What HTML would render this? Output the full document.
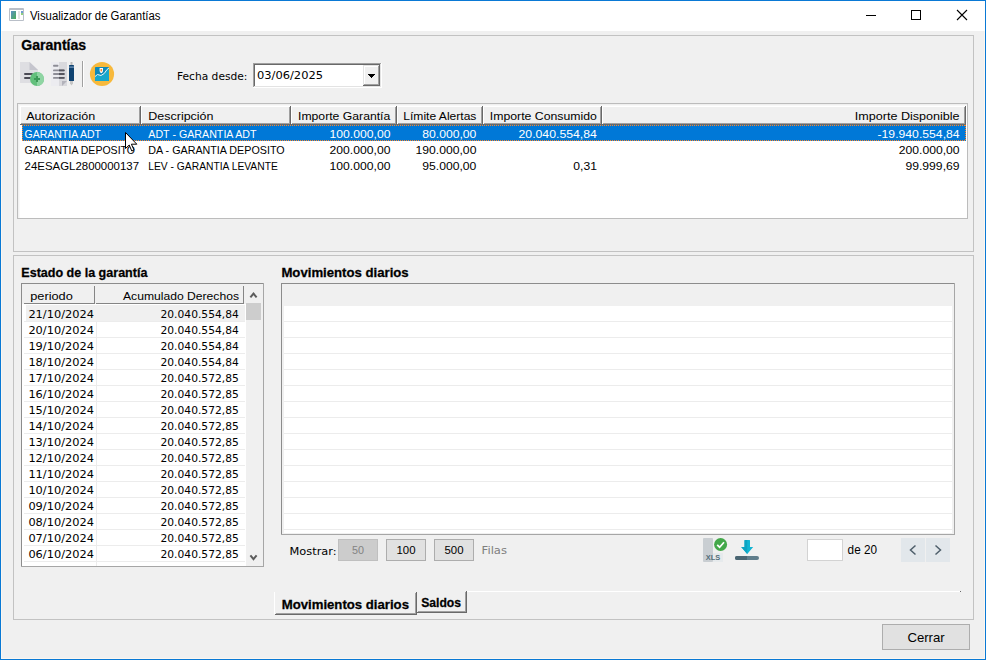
<!DOCTYPE html>
<html lang="es">
<head>
<meta charset="utf-8">
<title>Visualizador de Garantías</title>
<style>
html,body{margin:0;padding:0;background:#f0f0f0;overflow:hidden}
svg{display:block}
text{white-space:pre}
</style>
</head>
<body>
<svg width="986" height="660" viewBox="0 0 986 660">
<g id="window">
<rect x="0" y="0" width="986" height="660" fill="#0a79d5" />
<rect x="1" y="1" width="984" height="30" fill="#ffffff" />
<rect x="1" y="31" width="984" height="628" fill="#f0f0f0" />
<rect x="1" y="31" width="1" height="628" fill="#fcf7f0" />
<rect x="984" y="31" width="1" height="628" fill="#fcf7f0" />
<rect x="1" y="658" width="984" height="1" fill="#fcf7f0" />
</g>
<g id="titlebar">
<rect x="9" y="8" width="15" height="13" fill="#b9bfc8" rx="1"/>
<rect x="10" y="10" width="13" height="10" fill="#ffffff" />
<defs><linearGradient id="gi" x1="0" y1="0" x2="1" y2="1"><stop offset="0" stop-color="#5c8fc4"/><stop offset="1" stop-color="#4cae57"/></linearGradient></defs>
<rect x="11" y="11" width="5" height="8" fill="url(#gi)" />
<rect x="18" y="11" width="2" height="8" fill="#e4e4e4" />
<rect x="21" y="11" width="2" height="2" fill="#6f9bd0" />
<rect x="21" y="13" width="2" height="2" fill="#8fd07e" />
<text x="30" y="20" font-family="Liberation Sans, Arial, sans-serif" font-size="12" font-weight="normal" fill="#000" text-anchor="start" textLength="130.5" lengthAdjust="spacingAndGlyphs">Visualizador de Garantías</text>
<rect x="866" y="15" width="10" height="1" fill="#000" />
<rect x="911.5" y="10.5" width="9" height="9" fill="none" stroke="#000" stroke-width="1"/>
<path d="M957 10 L967 20 M967 10 L957 20" stroke="#000" stroke-width="1.1" fill="none"/>
</g>
<g id="panel-garantias">
<rect x="13" y="35" width="961" height="1" fill="#c2c2c2" />
<rect x="13" y="251" width="961" height="1" fill="#c2c2c2" />
<rect x="13" y="35" width="1" height="217" fill="#c2c2c2" />
<rect x="973" y="35" width="1" height="217" fill="#c2c2c2" />
<text x="21.2" y="49.7" font-family="Liberation Sans, Arial, sans-serif" font-size="14" font-weight="bold" fill="#000" stroke="#000" stroke-width="0.28" text-anchor="start" textLength="65.0" lengthAdjust="spacingAndGlyphs">Garantías</text>
</g>
<g id="toolbar">
<path d="M20 62 H29.5 L38 70 V83 H20 Z" fill="#dedee2"/>
<path d="M29.5 62 L38 70 H29.5 Z" fill="#c5c5cd"/>
<rect x="24" y="73" width="9" height="2" fill="#4b4b55" rx="1"/>
<rect x="24" y="77" width="7" height="2" fill="#4b4b55" rx="1"/>
<circle cx="37" cy="79" r="7" fill="#63c07c"/>
<path d="M37 72 A7 7 0 0 1 37 86 Z" fill="#8fd5a3"/>
<rect x="34" y="78" width="6" height="2" fill="#3c9a57" />
<rect x="36" y="76" width="2" height="6" fill="#3c9a57" />
<rect x="51" y="62" width="8" height="24" fill="#ececf0" />
<rect x="59" y="62" width="8" height="24" fill="#d9d9dd" />
<path d="M62 81 H67 L62 86 Z" fill="#b3b3bb"/>
<rect x="53" y="64.8" width="5.5" height="1.9" fill="#8d8d96" rx="0.9"/>
<rect x="53" y="69.4" width="11.700000000000003" height="1.9" fill="#8d8d96" rx="0.9"/>
<path d="M59 69.4 H63.800000000000004 a0.9 0.95 0 0 1 0 1.9 H59 Z" fill="#56565f"/>
<rect x="53" y="73.1" width="11.700000000000003" height="1.9" fill="#8d8d96" rx="0.9"/>
<path d="M59 73.1 H63.800000000000004 a0.9 0.95 0 0 1 0 1.9 H59 Z" fill="#56565f"/>
<rect x="53" y="76.9" width="11.700000000000003" height="1.9" fill="#8d8d96" rx="0.9"/>
<path d="M59 76.9 H63.800000000000004 a0.9 0.95 0 0 1 0 1.9 H59 Z" fill="#56565f"/>
<rect x="70.5" y="62" width="2" height="3" fill="#b9b9b9" />
<rect x="69" y="65" width="5" height="16" fill="#0f4270" rx="0.6"/>
<rect x="69" y="66.5" width="5" height="1.2" fill="#7d9ec2" />
<path d="M70 81 H73 V83.5 L71.5 85.5 L70 83.5 Z" fill="#c6c6c6"/>
<rect x="82" y="61" width="1" height="26" fill="#a0a0a0" />
<rect x="83" y="61" width="1" height="26" fill="#ffffff" />
<circle cx="102" cy="74" r="12.1" fill="#f7b93c"/>
<rect x="95" y="67" width="14" height="14" fill="#0e89b8" rx="0.8"/>
<path d="M95 76.5 L97.5 74.5 L101 75.5 L104.3 73.4 L107 69.5 L109 68 V80.2 Q109 81 108.2 81 H95.8 Q95 81 95 80.2 Z" fill="#17a7cb"/>
<path d="M95 76.5 L97.5 74.5 L101 75.5 L104.3 73.4 L107 69.5 L109 68" stroke="#ffffff" stroke-width="0.9" fill="none"/>
<path d="M99.6 68 H103 V71 Q103 72.6 101.3 73.2 Q99.6 72.6 99.6 71 Z" fill="#ffffff"/>
<rect x="100.5" y="69" width="1.6" height="2.4" fill="#f28b30" />
</g>
<g id="fecha">
<text x="177" y="80" font-family="DejaVu Sans, Verdana, sans-serif" font-size="11" font-weight="normal" fill="#000" text-anchor="start" textLength="70.4" lengthAdjust="spacingAndGlyphs">Fecha desde:</text>
<rect x="253" y="63" width="129" height="25" fill="#ffffff" />
<rect x="253" y="63" width="129" height="1" fill="#a0a0a0" />
<rect x="253" y="63" width="1" height="25" fill="#a0a0a0" />
<rect x="254" y="64" width="127" height="1" fill="#696969" />
<rect x="254" y="64" width="1" height="23" fill="#696969" />
<rect x="253" y="87" width="129" height="1" fill="#ffffff" />
<rect x="381" y="63" width="1" height="25" fill="#ffffff" />
<rect x="254" y="86" width="127" height="1" fill="#e3e3e3" />
<rect x="380" y="64" width="1" height="23" fill="#e3e3e3" />
<rect x="363" y="65" width="17" height="21" fill="#f0f0f0" />
<rect x="363" y="65" width="17" height="1" fill="#e3e3e3" />
<rect x="363" y="65" width="1" height="21" fill="#e3e3e3" />
<rect x="364" y="66" width="15" height="1" fill="#ffffff" />
<rect x="364" y="66" width="1" height="19" fill="#ffffff" />
<rect x="363" y="85" width="17" height="1" fill="#696969" />
<rect x="379" y="65" width="1" height="21" fill="#696969" />
<rect x="364" y="84" width="15" height="1" fill="#a0a0a0" />
<rect x="378" y="66" width="1" height="19" fill="#a0a0a0" />
<rect x="368" y="74" width="7" height="1" fill="#000" />
<rect x="369" y="75" width="5" height="1" fill="#000" />
<rect x="370" y="76" width="3" height="1" fill="#000" />
<rect x="371" y="77" width="1" height="1" fill="#000" />
<text x="257" y="79" font-family="DejaVu Sans, Verdana, sans-serif" font-size="11" font-weight="normal" fill="#000" text-anchor="start" textLength="66" lengthAdjust="spacingAndGlyphs">03/06/2025</text>
</g>
<g id="lista-garantias">
<rect x="17" y="103" width="951" height="116" fill="#ffffff" />
<rect x="17" y="103" width="951" height="1" fill="#bcbcbc" />
<rect x="17" y="218" width="951" height="1" fill="#bcbcbc" />
<rect x="17" y="103" width="1" height="116" fill="#bcbcbc" />
<rect x="967" y="103" width="1" height="116" fill="#bcbcbc" />
<rect x="18" y="104" width="949" height="1" fill="#f0f0f0" />
<rect x="18" y="105" width="949" height="1" fill="#f8f8f8" />
<rect x="18" y="104" width="1" height="114" fill="#f0f0f0" />
<rect x="19" y="105" width="1" height="113" fill="#f8f8f8" />
<rect x="20" y="106" width="121" height="19" fill="#f0f0f0" />
<rect x="20" y="106" width="121" height="1" fill="#ffffff" />
<rect x="20" y="106" width="1" height="19" fill="#ffffff" />
<rect x="20" y="124" width="121" height="1" fill="#696969" />
<rect x="140" y="106" width="1" height="19" fill="#696969" />
<rect x="21" y="123" width="119" height="1" fill="#a0a0a0" />
<rect x="139" y="107" width="1" height="17" fill="#a0a0a0" />
<rect x="141" y="106" width="150" height="19" fill="#f0f0f0" />
<rect x="141" y="106" width="150" height="1" fill="#ffffff" />
<rect x="141" y="106" width="1" height="19" fill="#ffffff" />
<rect x="141" y="124" width="150" height="1" fill="#696969" />
<rect x="290" y="106" width="1" height="19" fill="#696969" />
<rect x="142" y="123" width="148" height="1" fill="#a0a0a0" />
<rect x="289" y="107" width="1" height="17" fill="#a0a0a0" />
<rect x="291" y="106" width="106" height="19" fill="#f0f0f0" />
<rect x="291" y="106" width="106" height="1" fill="#ffffff" />
<rect x="291" y="106" width="1" height="19" fill="#ffffff" />
<rect x="291" y="124" width="106" height="1" fill="#696969" />
<rect x="396" y="106" width="1" height="19" fill="#696969" />
<rect x="292" y="123" width="104" height="1" fill="#a0a0a0" />
<rect x="395" y="107" width="1" height="17" fill="#a0a0a0" />
<rect x="397" y="106" width="86" height="19" fill="#f0f0f0" />
<rect x="397" y="106" width="86" height="1" fill="#ffffff" />
<rect x="397" y="106" width="1" height="19" fill="#ffffff" />
<rect x="397" y="124" width="86" height="1" fill="#696969" />
<rect x="482" y="106" width="1" height="19" fill="#696969" />
<rect x="398" y="123" width="84" height="1" fill="#a0a0a0" />
<rect x="481" y="107" width="1" height="17" fill="#a0a0a0" />
<rect x="483" y="106" width="119" height="19" fill="#f0f0f0" />
<rect x="483" y="106" width="119" height="1" fill="#ffffff" />
<rect x="483" y="106" width="1" height="19" fill="#ffffff" />
<rect x="483" y="124" width="119" height="1" fill="#696969" />
<rect x="601" y="106" width="1" height="19" fill="#696969" />
<rect x="484" y="123" width="117" height="1" fill="#a0a0a0" />
<rect x="600" y="107" width="1" height="17" fill="#a0a0a0" />
<rect x="602" y="106" width="364" height="19" fill="#f0f0f0" />
<rect x="602" y="106" width="364" height="1" fill="#ffffff" />
<rect x="602" y="106" width="1" height="19" fill="#ffffff" />
<rect x="602" y="124" width="364" height="1" fill="#696969" />
<rect x="965" y="106" width="1" height="19" fill="#696969" />
<rect x="603" y="123" width="362" height="1" fill="#a0a0a0" />
<rect x="964" y="107" width="1" height="17" fill="#a0a0a0" />
<text x="26.2" y="120.3" font-family="Liberation Sans, Arial, sans-serif" font-size="11.4" font-weight="normal" fill="#000" text-anchor="start" textLength="69.0" lengthAdjust="spacingAndGlyphs">Autorización</text>
<text x="148.3" y="120.3" font-family="Liberation Sans, Arial, sans-serif" font-size="11.4" font-weight="normal" fill="#000" text-anchor="start" textLength="65.2" lengthAdjust="spacingAndGlyphs">Descripción</text>
<text x="298" y="120.3" font-family="Liberation Sans, Arial, sans-serif" font-size="11.4" font-weight="normal" fill="#000" text-anchor="start" textLength="92.3" lengthAdjust="spacingAndGlyphs">Importe Garantía</text>
<text x="403.3" y="120.3" font-family="Liberation Sans, Arial, sans-serif" font-size="11.4" font-weight="normal" fill="#000" text-anchor="start" textLength="73.1" lengthAdjust="spacingAndGlyphs">Límite Alertas</text>
<text x="489.8" y="120.3" font-family="Liberation Sans, Arial, sans-serif" font-size="11.4" font-weight="normal" fill="#000" text-anchor="start" textLength="107.1" lengthAdjust="spacingAndGlyphs">Importe Consumido</text>
<text x="854.8" y="120.3" font-family="Liberation Sans, Arial, sans-serif" font-size="11.4" font-weight="normal" fill="#000" text-anchor="start" textLength="104.8" lengthAdjust="spacingAndGlyphs">Importe Disponible</text>
<rect x="22" y="125" width="944" height="16" fill="#0078d7" />
<g stroke="#ff8728" stroke-width="1" stroke-dasharray="1 1" shape-rendering="crispEdges" fill="none"><path d="M22 125.5 H966"/><path d="M22 140.5 H966"/><path d="M22.5 125 V141"/><path d="M965.5 125 V141"/></g>
<text x="24.6" y="137.9" font-family="Liberation Sans, Arial, sans-serif" font-size="11.4" font-weight="normal" fill="#ffffff" text-anchor="start" textLength="76.3" lengthAdjust="spacingAndGlyphs">GARANTIA ADT</text>
<text x="148.3" y="137.9" font-family="Liberation Sans, Arial, sans-serif" font-size="11.4" font-weight="normal" fill="#ffffff" text-anchor="start" textLength="108.3" lengthAdjust="spacingAndGlyphs">ADT - GARANTIA ADT</text>
<text x="329.6" y="137.9" font-family="Liberation Sans, Arial, sans-serif" font-size="11.4" font-weight="normal" fill="#ffffff" text-anchor="start" textLength="60.8" lengthAdjust="spacingAndGlyphs">100.000,00</text>
<text x="422.3" y="137.9" font-family="Liberation Sans, Arial, sans-serif" font-size="11.4" font-weight="normal" fill="#ffffff" text-anchor="start" textLength="54.1" lengthAdjust="spacingAndGlyphs">80.000,00</text>
<text x="518.5" y="137.9" font-family="Liberation Sans, Arial, sans-serif" font-size="11.4" font-weight="normal" fill="#ffffff" text-anchor="start" textLength="78.4" lengthAdjust="spacingAndGlyphs">20.040.554,84</text>
<text x="877.5" y="137.9" font-family="Liberation Sans, Arial, sans-serif" font-size="11.4" font-weight="normal" fill="#ffffff" text-anchor="start" textLength="82.1" lengthAdjust="spacingAndGlyphs">-19.940.554,84</text>
<text x="24.6" y="153.9" font-family="Liberation Sans, Arial, sans-serif" font-size="11.4" font-weight="normal" fill="#000000" text-anchor="start" textLength="110.4" lengthAdjust="spacingAndGlyphs">GARANTIA DEPOSITO</text>
<text x="148.3" y="153.9" font-family="Liberation Sans, Arial, sans-serif" font-size="11.4" font-weight="normal" fill="#000000" text-anchor="start" textLength="136.3" lengthAdjust="spacingAndGlyphs">DA - GARANTIA DEPOSITO</text>
<text x="329.6" y="153.9" font-family="Liberation Sans, Arial, sans-serif" font-size="11.4" font-weight="normal" fill="#000000" text-anchor="start" textLength="60.8" lengthAdjust="spacingAndGlyphs">200.000,00</text>
<text x="415.5" y="153.9" font-family="Liberation Sans, Arial, sans-serif" font-size="11.4" font-weight="normal" fill="#000000" text-anchor="start" textLength="60.9" lengthAdjust="spacingAndGlyphs">190.000,00</text>
<text x="898.8" y="153.9" font-family="Liberation Sans, Arial, sans-serif" font-size="11.4" font-weight="normal" fill="#000000" text-anchor="start" textLength="60.8" lengthAdjust="spacingAndGlyphs">200.000,00</text>
<text x="24.6" y="169.9" font-family="Liberation Sans, Arial, sans-serif" font-size="11.4" font-weight="normal" fill="#000000" text-anchor="start" textLength="114.4" lengthAdjust="spacingAndGlyphs">24ESAGL2800000137</text>
<text x="148.3" y="169.9" font-family="Liberation Sans, Arial, sans-serif" font-size="11.4" font-weight="normal" fill="#000000" text-anchor="start" textLength="129.5" lengthAdjust="spacingAndGlyphs">LEV - GARANTIA LEVANTE</text>
<text x="329.6" y="169.9" font-family="Liberation Sans, Arial, sans-serif" font-size="11.4" font-weight="normal" fill="#000000" text-anchor="start" textLength="60.8" lengthAdjust="spacingAndGlyphs">100.000,00</text>
<text x="422.3" y="169.9" font-family="Liberation Sans, Arial, sans-serif" font-size="11.4" font-weight="normal" fill="#000000" text-anchor="start" textLength="54.1" lengthAdjust="spacingAndGlyphs">95.000,00</text>
<text x="573.3" y="169.9" font-family="Liberation Sans, Arial, sans-serif" font-size="11.4" font-weight="normal" fill="#000000" text-anchor="start" textLength="23.6" lengthAdjust="spacingAndGlyphs">0,31</text>
<text x="905.4" y="169.9" font-family="Liberation Sans, Arial, sans-serif" font-size="11.4" font-weight="normal" fill="#000000" text-anchor="start" textLength="54.2" lengthAdjust="spacingAndGlyphs">99.999,69</text>
<path d="M125.5 132.5 V148.5 L129.2 145 L131.8 151 L134 150 L131.4 144.2 H136.8 Z" fill="#ffffff" stroke="#000000" stroke-width="1" stroke-linejoin="miter"/>
</g>
<g id="panel-detalle">
<rect x="13" y="255" width="961" height="1" fill="#c2c2c2" />
<rect x="13" y="619" width="961" height="1" fill="#c2c2c2" />
<rect x="13" y="255" width="1" height="365" fill="#c2c2c2" />
<rect x="973" y="255" width="1" height="365" fill="#c2c2c2" />
<text x="21.3" y="277" font-family="Liberation Sans, Arial, sans-serif" font-size="13.2" font-weight="bold" fill="#000" stroke="#000" stroke-width="0.28" text-anchor="start" textLength="126.1" lengthAdjust="spacingAndGlyphs">Estado de la garantía</text>
<text x="281.4" y="277" font-family="Liberation Sans, Arial, sans-serif" font-size="13.2" font-weight="bold" fill="#000" stroke="#000" stroke-width="0.28" text-anchor="start" textLength="127.3" lengthAdjust="spacingAndGlyphs">Movimientos diarios</text>
</g>
<g id="grid-estado">
<rect x="21" y="283" width="243" height="284" fill="#ffffff" />
<rect x="22" y="284" width="241" height="20" fill="#f0f0f0" />
<rect x="21" y="283" width="243" height="1" fill="#8c8c8c" />
<rect x="21" y="283" width="1" height="284" fill="#8c8c8c" />
<rect x="21" y="566" width="243" height="1" fill="#a6a6a6" />
<rect x="263" y="283" width="1" height="284" fill="#a6a6a6" />
<rect x="24" y="303" width="71" height="1" fill="#858585" />
<rect x="94" y="286" width="1" height="18" fill="#858585" />
<rect x="96" y="303" width="148" height="1" fill="#858585" />
<rect x="243" y="286" width="1" height="18" fill="#858585" />
<text x="30.2" y="300" font-family="Liberation Sans, Arial, sans-serif" font-size="11.4" font-weight="normal" fill="#000" text-anchor="start" textLength="42.6" lengthAdjust="spacingAndGlyphs">periodo</text>
<text x="123" y="300" font-family="Liberation Sans, Arial, sans-serif" font-size="11.4" font-weight="normal" fill="#000" text-anchor="start" textLength="116" lengthAdjust="spacingAndGlyphs">Acumulado Derechos</text>
<rect x="246" y="284" width="17" height="282" fill="#f0f0f0" />
<rect x="246" y="303" width="15" height="17" fill="#cdcdcd" />
<path d="M250.4 297.4 L253.5 293.6 L256.6 297.4" stroke="#5c5c5c" stroke-width="2" fill="none"/>
<path d="M250.4 555.3 L253.5 559.1 L256.6 555.3" stroke="#5c5c5c" stroke-width="2" fill="none"/>
<rect x="26" y="305" width="219" height="16" fill="#f0f0f0" />
<rect x="24" y="321" width="221" height="1" fill="#ececec" />
<rect x="24" y="337" width="221" height="1" fill="#ececec" />
<rect x="24" y="353" width="221" height="1" fill="#ececec" />
<rect x="24" y="369" width="221" height="1" fill="#ececec" />
<rect x="24" y="385" width="221" height="1" fill="#ececec" />
<rect x="24" y="401" width="221" height="1" fill="#ececec" />
<rect x="24" y="417" width="221" height="1" fill="#ececec" />
<rect x="24" y="433" width="221" height="1" fill="#ececec" />
<rect x="24" y="449" width="221" height="1" fill="#ececec" />
<rect x="24" y="465" width="221" height="1" fill="#ececec" />
<rect x="24" y="481" width="221" height="1" fill="#ececec" />
<rect x="24" y="497" width="221" height="1" fill="#ececec" />
<rect x="24" y="513" width="221" height="1" fill="#ececec" />
<rect x="24" y="529" width="221" height="1" fill="#ececec" />
<rect x="24" y="545" width="221" height="1" fill="#ececec" />
<rect x="24" y="561" width="221" height="1" fill="#ececec" />
<rect x="96" y="322" width="1" height="244" fill="#ececec" />
<text x="28.4" y="317.7" font-family="DejaVu Sans, Verdana, sans-serif" font-size="11" font-weight="normal" fill="#000" text-anchor="start" textLength="65.5" lengthAdjust="spacingAndGlyphs">21/10/2024</text>
<text x="160.5" y="317.7" font-family="DejaVu Sans, Verdana, sans-serif" font-size="11" font-weight="normal" fill="#000" text-anchor="start" textLength="78.3" lengthAdjust="spacingAndGlyphs">20.040.554,84</text>
<text x="28.4" y="333.7" font-family="DejaVu Sans, Verdana, sans-serif" font-size="11" font-weight="normal" fill="#000" text-anchor="start" textLength="65.5" lengthAdjust="spacingAndGlyphs">20/10/2024</text>
<text x="160.5" y="333.7" font-family="DejaVu Sans, Verdana, sans-serif" font-size="11" font-weight="normal" fill="#000" text-anchor="start" textLength="78.3" lengthAdjust="spacingAndGlyphs">20.040.554,84</text>
<text x="28.4" y="349.7" font-family="DejaVu Sans, Verdana, sans-serif" font-size="11" font-weight="normal" fill="#000" text-anchor="start" textLength="65.5" lengthAdjust="spacingAndGlyphs">19/10/2024</text>
<text x="160.5" y="349.7" font-family="DejaVu Sans, Verdana, sans-serif" font-size="11" font-weight="normal" fill="#000" text-anchor="start" textLength="78.3" lengthAdjust="spacingAndGlyphs">20.040.554,84</text>
<text x="28.4" y="365.7" font-family="DejaVu Sans, Verdana, sans-serif" font-size="11" font-weight="normal" fill="#000" text-anchor="start" textLength="65.5" lengthAdjust="spacingAndGlyphs">18/10/2024</text>
<text x="160.5" y="365.7" font-family="DejaVu Sans, Verdana, sans-serif" font-size="11" font-weight="normal" fill="#000" text-anchor="start" textLength="78.3" lengthAdjust="spacingAndGlyphs">20.040.554,84</text>
<text x="28.4" y="381.7" font-family="DejaVu Sans, Verdana, sans-serif" font-size="11" font-weight="normal" fill="#000" text-anchor="start" textLength="65.5" lengthAdjust="spacingAndGlyphs">17/10/2024</text>
<text x="160.5" y="381.7" font-family="DejaVu Sans, Verdana, sans-serif" font-size="11" font-weight="normal" fill="#000" text-anchor="start" textLength="78.3" lengthAdjust="spacingAndGlyphs">20.040.572,85</text>
<text x="28.4" y="397.7" font-family="DejaVu Sans, Verdana, sans-serif" font-size="11" font-weight="normal" fill="#000" text-anchor="start" textLength="65.5" lengthAdjust="spacingAndGlyphs">16/10/2024</text>
<text x="160.5" y="397.7" font-family="DejaVu Sans, Verdana, sans-serif" font-size="11" font-weight="normal" fill="#000" text-anchor="start" textLength="78.3" lengthAdjust="spacingAndGlyphs">20.040.572,85</text>
<text x="28.4" y="413.7" font-family="DejaVu Sans, Verdana, sans-serif" font-size="11" font-weight="normal" fill="#000" text-anchor="start" textLength="65.5" lengthAdjust="spacingAndGlyphs">15/10/2024</text>
<text x="160.5" y="413.7" font-family="DejaVu Sans, Verdana, sans-serif" font-size="11" font-weight="normal" fill="#000" text-anchor="start" textLength="78.3" lengthAdjust="spacingAndGlyphs">20.040.572,85</text>
<text x="28.4" y="429.7" font-family="DejaVu Sans, Verdana, sans-serif" font-size="11" font-weight="normal" fill="#000" text-anchor="start" textLength="65.5" lengthAdjust="spacingAndGlyphs">14/10/2024</text>
<text x="160.5" y="429.7" font-family="DejaVu Sans, Verdana, sans-serif" font-size="11" font-weight="normal" fill="#000" text-anchor="start" textLength="78.3" lengthAdjust="spacingAndGlyphs">20.040.572,85</text>
<text x="28.4" y="445.7" font-family="DejaVu Sans, Verdana, sans-serif" font-size="11" font-weight="normal" fill="#000" text-anchor="start" textLength="65.5" lengthAdjust="spacingAndGlyphs">13/10/2024</text>
<text x="160.5" y="445.7" font-family="DejaVu Sans, Verdana, sans-serif" font-size="11" font-weight="normal" fill="#000" text-anchor="start" textLength="78.3" lengthAdjust="spacingAndGlyphs">20.040.572,85</text>
<text x="28.4" y="461.7" font-family="DejaVu Sans, Verdana, sans-serif" font-size="11" font-weight="normal" fill="#000" text-anchor="start" textLength="65.5" lengthAdjust="spacingAndGlyphs">12/10/2024</text>
<text x="160.5" y="461.7" font-family="DejaVu Sans, Verdana, sans-serif" font-size="11" font-weight="normal" fill="#000" text-anchor="start" textLength="78.3" lengthAdjust="spacingAndGlyphs">20.040.572,85</text>
<text x="28.4" y="477.7" font-family="DejaVu Sans, Verdana, sans-serif" font-size="11" font-weight="normal" fill="#000" text-anchor="start" textLength="65.5" lengthAdjust="spacingAndGlyphs">11/10/2024</text>
<text x="160.5" y="477.7" font-family="DejaVu Sans, Verdana, sans-serif" font-size="11" font-weight="normal" fill="#000" text-anchor="start" textLength="78.3" lengthAdjust="spacingAndGlyphs">20.040.572,85</text>
<text x="28.4" y="493.7" font-family="DejaVu Sans, Verdana, sans-serif" font-size="11" font-weight="normal" fill="#000" text-anchor="start" textLength="65.5" lengthAdjust="spacingAndGlyphs">10/10/2024</text>
<text x="160.5" y="493.7" font-family="DejaVu Sans, Verdana, sans-serif" font-size="11" font-weight="normal" fill="#000" text-anchor="start" textLength="78.3" lengthAdjust="spacingAndGlyphs">20.040.572,85</text>
<text x="28.4" y="509.7" font-family="DejaVu Sans, Verdana, sans-serif" font-size="11" font-weight="normal" fill="#000" text-anchor="start" textLength="65.5" lengthAdjust="spacingAndGlyphs">09/10/2024</text>
<text x="160.5" y="509.7" font-family="DejaVu Sans, Verdana, sans-serif" font-size="11" font-weight="normal" fill="#000" text-anchor="start" textLength="78.3" lengthAdjust="spacingAndGlyphs">20.040.572,85</text>
<text x="28.4" y="525.7" font-family="DejaVu Sans, Verdana, sans-serif" font-size="11" font-weight="normal" fill="#000" text-anchor="start" textLength="65.5" lengthAdjust="spacingAndGlyphs">08/10/2024</text>
<text x="160.5" y="525.7" font-family="DejaVu Sans, Verdana, sans-serif" font-size="11" font-weight="normal" fill="#000" text-anchor="start" textLength="78.3" lengthAdjust="spacingAndGlyphs">20.040.572,85</text>
<text x="28.4" y="541.7" font-family="DejaVu Sans, Verdana, sans-serif" font-size="11" font-weight="normal" fill="#000" text-anchor="start" textLength="65.5" lengthAdjust="spacingAndGlyphs">07/10/2024</text>
<text x="160.5" y="541.7" font-family="DejaVu Sans, Verdana, sans-serif" font-size="11" font-weight="normal" fill="#000" text-anchor="start" textLength="78.3" lengthAdjust="spacingAndGlyphs">20.040.572,85</text>
<text x="28.4" y="557.7" font-family="DejaVu Sans, Verdana, sans-serif" font-size="11" font-weight="normal" fill="#000" text-anchor="start" textLength="65.5" lengthAdjust="spacingAndGlyphs">06/10/2024</text>
<text x="160.5" y="557.7" font-family="DejaVu Sans, Verdana, sans-serif" font-size="11" font-weight="normal" fill="#000" text-anchor="start" textLength="78.3" lengthAdjust="spacingAndGlyphs">20.040.572,85</text>
</g>
<g id="grid-movimientos">
<rect x="281" y="283" width="674" height="252" fill="#f0f0f0" />
<rect x="284" y="306" width="668" height="227" fill="#ffffff" />
<rect x="284" y="321" width="668" height="1" fill="#ececec" />
<rect x="284" y="337" width="668" height="1" fill="#ececec" />
<rect x="284" y="353" width="668" height="1" fill="#ececec" />
<rect x="284" y="369" width="668" height="1" fill="#ececec" />
<rect x="284" y="385" width="668" height="1" fill="#ececec" />
<rect x="284" y="401" width="668" height="1" fill="#ececec" />
<rect x="284" y="417" width="668" height="1" fill="#ececec" />
<rect x="284" y="433" width="668" height="1" fill="#ececec" />
<rect x="284" y="449" width="668" height="1" fill="#ececec" />
<rect x="284" y="465" width="668" height="1" fill="#ececec" />
<rect x="284" y="481" width="668" height="1" fill="#ececec" />
<rect x="284" y="497" width="668" height="1" fill="#ececec" />
<rect x="284" y="513" width="668" height="1" fill="#ececec" />
<rect x="284" y="529" width="668" height="1" fill="#ececec" />
<rect x="281" y="283" width="674" height="1" fill="#8c8c8c" />
<rect x="281" y="283" width="1" height="252" fill="#8c8c8c" />
<rect x="281" y="534" width="674" height="1" fill="#a6a6a6" />
<rect x="954" y="283" width="1" height="252" fill="#a6a6a6" />
</g>
<g id="pager">
<text x="289.5" y="554.7" font-family="DejaVu Sans, Verdana, sans-serif" font-size="11" font-weight="normal" fill="#000" text-anchor="start" textLength="47.1" lengthAdjust="spacingAndGlyphs">Mostrar:</text>
<rect x="338" y="539" width="40" height="22" fill="#cccccc" />
<rect x="338" y="539" width="40" height="1" fill="#bfbfbf" />
<rect x="338" y="560" width="40" height="1" fill="#bfbfbf" />
<rect x="338" y="539" width="1" height="22" fill="#bfbfbf" />
<rect x="377" y="539" width="1" height="22" fill="#bfbfbf" />
<rect x="386" y="539" width="40" height="22" fill="#e1e1e1" />
<rect x="386" y="539" width="40" height="1" fill="#adadad" />
<rect x="386" y="560" width="40" height="1" fill="#adadad" />
<rect x="386" y="539" width="1" height="22" fill="#adadad" />
<rect x="425" y="539" width="1" height="22" fill="#adadad" />
<rect x="434" y="539" width="40" height="22" fill="#e1e1e1" />
<rect x="434" y="539" width="40" height="1" fill="#adadad" />
<rect x="434" y="560" width="40" height="1" fill="#adadad" />
<rect x="434" y="539" width="1" height="22" fill="#adadad" />
<rect x="473" y="539" width="1" height="22" fill="#adadad" />
<text x="352" y="554" font-family="Liberation Sans, Arial, sans-serif" font-size="11.5" font-weight="normal" fill="#838383" text-anchor="start" textLength="12" lengthAdjust="spacingAndGlyphs">50</text>
<text x="396.5" y="554" font-family="Liberation Sans, Arial, sans-serif" font-size="11.5" font-weight="normal" fill="#000" text-anchor="start" textLength="19.0" lengthAdjust="spacingAndGlyphs">100</text>
<text x="444.5" y="554" font-family="Liberation Sans, Arial, sans-serif" font-size="11.5" font-weight="normal" fill="#000" text-anchor="start" textLength="19.0" lengthAdjust="spacingAndGlyphs">500</text>
<text x="481.6" y="554" font-family="DejaVu Sans, Verdana, sans-serif" font-size="11" font-weight="normal" fill="#7f7f7f" text-anchor="start" textLength="25.4" lengthAdjust="spacingAndGlyphs">Filas</text>
<rect x="703" y="538" width="10" height="24" fill="#c9ced2" rx="1"/>
<rect x="713" y="553" width="10" height="9" fill="#e6eaec" />
<circle cx="720.6" cy="544.5" r="6.5" fill="#43a84a"/>
<path d="M717.2 544.8 L719.6 547.2 L724 542.2" stroke="#ffffff" stroke-width="1.7" fill="none"/>
<text x="705.8" y="559.7" font-family="Liberation Sans, Arial, sans-serif" font-size="7.4" font-weight="bold" fill="#546e7a" text-anchor="start" textLength="14.4" lengthAdjust="spacingAndGlyphs">XLS</text>
<path d="M744.5 540.5 Q744.5 540 745 540 H749.5 Q750 540 750 540.5 V547 H753.2 L747.2 554 L741.2 547 H744.5 Z" fill="#12b4d2"/>
<path d="M744.5 540.5 Q744.5 540 745 540 H747.2 V554 L741.2 547 H744.5 Z" fill="#0ea3c2"/>
<rect x="735" y="556" width="24" height="4" fill="#607d8b" rx="2"/>
<path d="M737 556 H747 V560 H737 A2 2 0 0 1 737 556 Z" fill="#4a6572"/>
<rect x="807" y="539" width="36" height="22" fill="#ffffff" />
<rect x="807" y="539" width="36" height="1" fill="#d3d3d3" />
<rect x="807" y="560" width="36" height="1" fill="#d3d3d3" />
<rect x="807" y="539" width="1" height="22" fill="#d3d3d3" />
<rect x="842" y="539" width="1" height="22" fill="#d3d3d3" />
<text x="847.6" y="554" font-family="Liberation Sans, Arial, sans-serif" font-size="12.5" font-weight="normal" fill="#000" text-anchor="start" textLength="29.4" lengthAdjust="spacingAndGlyphs">de 20</text>
<rect x="901" y="538" width="24" height="24" fill="#e2e7eb" />
<rect x="926" y="538" width="24" height="24" fill="#e2e7eb" />
<path d="M915.5 545.5 L910.5 550 L915.5 554.5" stroke="#4f5f6b" stroke-width="1.5" fill="none"/>
<path d="M935.5 545.5 L940.5 550 L935.5 554.5" stroke="#4f5f6b" stroke-width="1.5" fill="none"/>
</g>
<g id="tabs">
<rect x="467" y="591" width="494" height="1" fill="#ffffff" />
<rect x="960" y="591" width="1" height="1" fill="#696969" />
<rect x="274" y="592" width="1" height="22" fill="#ffffff" />
<rect x="275" y="614" width="141" height="1" fill="#696969" />
<rect x="416" y="592" width="1" height="23" fill="#696969" />
<rect x="276" y="613" width="139" height="1" fill="#a0a0a0" />
<rect x="415" y="593" width="1" height="21" fill="#a0a0a0" />
<rect x="417" y="612" width="49" height="1" fill="#696969" />
<rect x="466" y="591" width="1" height="22" fill="#696969" />
<rect x="418" y="611" width="47" height="1" fill="#a0a0a0" />
<rect x="465" y="592" width="1" height="20" fill="#a0a0a0" />
<text x="281.7" y="609" font-family="Liberation Sans, Arial, sans-serif" font-size="13.2" font-weight="bold" fill="#000" stroke="#000" stroke-width="0.28" text-anchor="start" textLength="127.3" lengthAdjust="spacingAndGlyphs">Movimientos diarios</text>
<text x="421.2" y="607" font-family="Liberation Sans, Arial, sans-serif" font-size="13.2" font-weight="bold" fill="#000" stroke="#000" stroke-width="0.28" text-anchor="start" textLength="39.8" lengthAdjust="spacingAndGlyphs">Saldos</text>
</g>
<g id="btn-cerrar">
<rect x="882" y="624" width="88" height="26" fill="#e1e1e1" />
<rect x="882" y="624" width="88" height="1" fill="#adadad" />
<rect x="882" y="649" width="88" height="1" fill="#adadad" />
<rect x="882" y="624" width="1" height="26" fill="#adadad" />
<rect x="969" y="624" width="1" height="26" fill="#adadad" />
<text x="907.4" y="641.8" font-family="Liberation Sans, Arial, sans-serif" font-size="13" font-weight="normal" fill="#000" text-anchor="start" textLength="37.3" lengthAdjust="spacingAndGlyphs">Cerrar</text>
</g>
</svg>
</body>
</html>
